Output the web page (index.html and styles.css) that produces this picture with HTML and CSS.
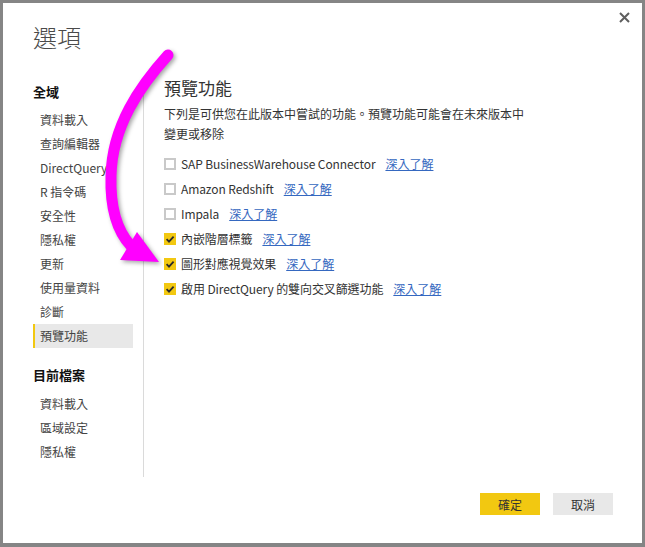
FILE: index.html
```html
<!DOCTYPE html>
<html lang="zh-Hant">
<head>
<meta charset="utf-8">
<title>選項</title>
<link rel="stylesheet" href="styles.css">
</head>
<body>
<div class="dialog">
  <button class="close" aria-label="關閉">
    <svg width="11" height="11" viewBox="0 0 11 11"><path d="M1 1 L10 10 M10 1 L1 10" stroke="#5f5f5f" stroke-width="2" fill="none"/></svg>
  </button>
  <h1 class="title">選項</h1>
  <div class="body">
    <nav class="sidebar">
      <div class="group-title">全域</div>
      <ul class="nav-list">
        <li class="nav-item">資料載入</li>
        <li class="nav-item">查詢編輯器</li>
        <li class="nav-item">DirectQuery</li>
        <li class="nav-item">R 指令碼</li>
        <li class="nav-item">安全性</li>
        <li class="nav-item">隱私權</li>
        <li class="nav-item">更新</li>
        <li class="nav-item">使用量資料</li>
        <li class="nav-item">診斷</li>
        <li class="nav-item active">預覽功能</li>
      </ul>
      <div class="group-title second">目前檔案</div>
      <ul class="nav-list">
        <li class="nav-item">資料載入</li>
        <li class="nav-item">區域設定</li>
        <li class="nav-item">隱私權</li>
      </ul>
    </nav>
    <div class="divider"></div>
    <main class="content">
      <h2 class="section-title">預覽功能</h2>
      <p class="desc">下列是可供您在此版本中嘗試的功能。預覽功能可能會在未來版本中變更或移除</p>
      <ul class="features">
        <li class="feature"><span class="cb"></span><span class="label">SAP BusinessWarehouse Connector</span><a class="more" href="#">深入了解</a></li>
        <li class="feature"><span class="cb"></span><span class="label">Amazon Redshift</span><a class="more" href="#">深入了解</a></li>
        <li class="feature"><span class="cb"></span><span class="label">Impala</span><a class="more" href="#">深入了解</a></li>
        <li class="feature"><span class="cb checked"><svg width="12" height="12" viewBox="0 0 12 12"><path d="M2.6 6.2 L5 8.6 L9.6 3.6" stroke="#2b2b2b" stroke-width="1.8" fill="none"/></svg></span><span class="label">內嵌階層標籤</span><a class="more" href="#">深入了解</a></li>
        <li class="feature"><span class="cb checked"><svg width="12" height="12" viewBox="0 0 12 12"><path d="M2.6 6.2 L5 8.6 L9.6 3.6" stroke="#2b2b2b" stroke-width="1.8" fill="none"/></svg></span><span class="label">圖形對應視覺效果</span><a class="more" href="#">深入了解</a></li>
        <li class="feature"><span class="cb checked"><svg width="12" height="12" viewBox="0 0 12 12"><path d="M2.6 6.2 L5 8.6 L9.6 3.6" stroke="#2b2b2b" stroke-width="1.8" fill="none"/></svg></span><span class="label">啟用 DirectQuery 的雙向交叉篩選功能</span><a class="more" href="#">深入了解</a></li>
      </ul>
    </main>
  </div>
  <footer class="footer">
    <button class="btn primary">確定</button>
    <button class="btn">取消</button>
  </footer>
  <svg class="arrow" width="645" height="547" viewBox="0 0 645 547">
    <path d="M168,55 C140,86 112,126 111,176 C110,210 118,232 131,246" stroke="#ff00ff" stroke-width="11" stroke-linecap="round" fill="none"/>
    <polygon points="137,232 120,260 159,262" fill="#ff00ff"/>
  </svg>
</div>
</body>
</html>
```

FILE: styles.css
```css
* { box-sizing: border-box; }
html, body { margin: 0; padding: 0; }
body {
  width: 645px;
  height: 547px;
  font-family: "Noto Sans CJK TC", sans-serif;
  font-size: 12px;
  color: #333;
}
.dialog {
  position: relative;
  width: 645px;
  height: 547px;
  background: #fff;
  border: 3px solid #858585;
  border-bottom-width: 4px;
  display: flex;
  flex-direction: column;
}
.close {
  position: absolute;
  top: 8px;
  right: 11px;
  width: 13px;
  height: 13px;
  padding: 1px;
  border: 0;
  background: none;
  display: flex;
}
.title {
  margin: 0;
  padding: 19px 0 0 30px;
  font-size: 24px;
  line-height: 30px;
  font-weight: 300;
  color: #4a4a4a;
}
.body {
  margin-top: 24px;
  display: grid;
  grid-template-columns: 140px 1px 1fr;
}
.sidebar { padding: 6px 0 0 30px; }
.group-title {
  font-size: 13px;
  font-weight: 700;
  line-height: 20px;
  color: #111;
}
.nav-list {
  list-style: none;
  margin: 6px 0 0;
  padding: 0;
}
.nav-list + .group-title { margin-top: 17px; }
.group-title.second + .nav-list { margin-top: 7px; }
.nav-item {
  width: 100px;
  height: 24px;
  line-height: 24px;
  padding-left: 7px;
  color: #444;
  white-space: nowrap;
}
.nav-item.active {
  background: #e8e8e8;
  border-left: 2px solid #f2c811;
  padding-left: 5px;
}
.divider {
  margin-top: 14px;
  height: 387px;
  background: #dadada;
}
.content { padding-left: 20px; }
.section-title {
  margin: 0;
  font-size: 17px;
  line-height: 24px;
  font-weight: 400;
  color: #333;
}
.desc {
  margin: 4px 0 0;
  width: 364px;
  line-height: 20px;
  color: #333;
}
.features {
  list-style: none;
  margin: 7px 0 0;
  padding: 0;
}
.feature {
  height: 25px;
  display: flex;
  align-items: center;
}
.cb {
  width: 12px;
  height: 12px;
  border: 2px solid #c9c9c9;
  margin-right: 5px;
  flex: none;
  display: flex;
}
.cb.checked {
  border: 0;
  background: #f2c811;
}
.label {
  color: #333;
  letter-spacing: -0.1px;
}
.more {
  margin-left: 10px;
  color: #3568c0;
  text-decoration: underline;
}
.footer {
  margin-top: auto;
  padding: 0 29px 28px 0;
  display: flex;
  justify-content: flex-end;
  gap: 13px;
}
.btn {
  width: 60px;
  height: 22px;
  border: 0;
  background: #e8e8e8;
  font-family: "Noto Sans CJK TC", sans-serif;
  font-size: 12px;
  color: #333;
  padding: 0;
}
.btn.primary { background: #f2c811; }
.arrow {
  position: absolute;
  top: -3px;
  left: -3px;
  pointer-events: none;
  filter: drop-shadow(2px 2px 2px rgba(0,0,0,0.35));
}
```
